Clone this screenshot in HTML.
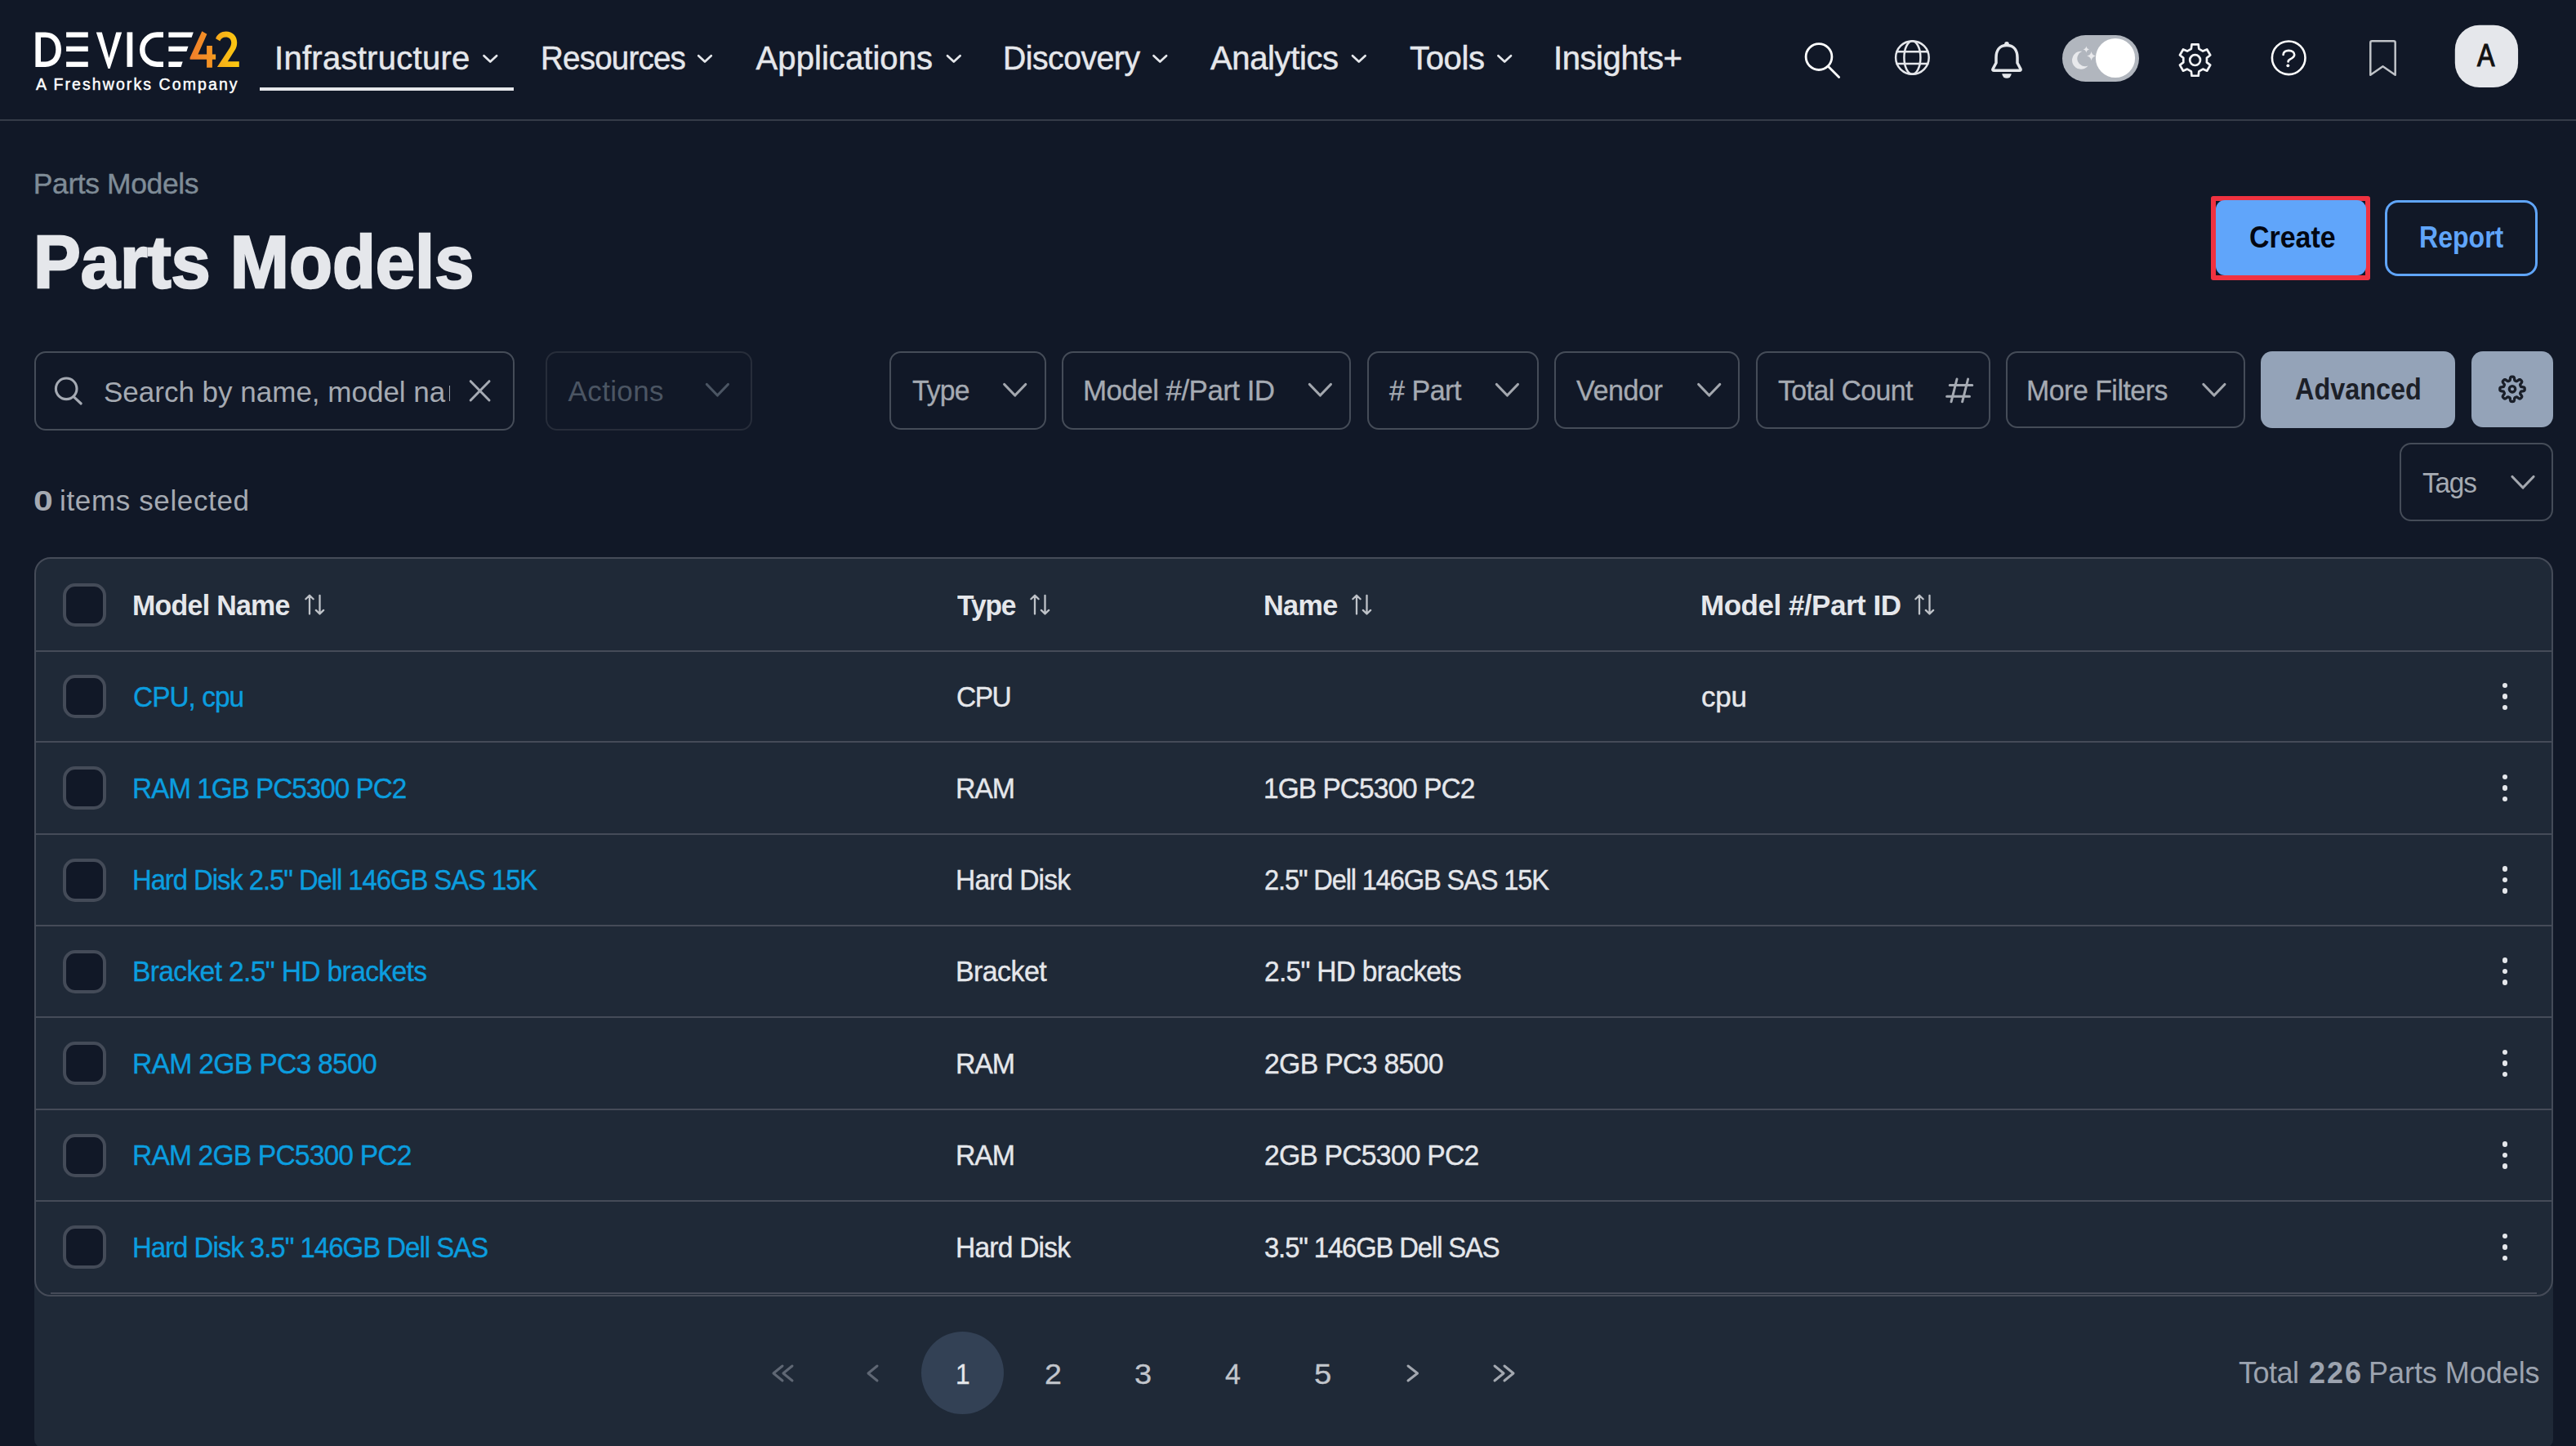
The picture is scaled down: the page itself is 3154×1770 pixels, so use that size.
<!DOCTYPE html>
<html><head><meta charset="utf-8"><style>
html,body{margin:0;padding:0;width:3154px;height:1770px;overflow:hidden;background:#111827;}
body{position:relative;font-family:"Liberation Sans", sans-serif;}
.t{position:absolute;line-height:1;white-space:nowrap;}
</style></head><body>
<div style="position:absolute;left:0;top:146px;width:3154px;height:2px;background:#353b48"></div>
<svg style="position:absolute;left:0;top:0" width="320" height="130" viewBox="0 0 320 130">
<defs><linearGradient id="lg42" x1="232" y1="0" x2="293" y2="0" gradientUnits="userSpaceOnUse"><stop offset="0" stop-color="#f07d2b"/><stop offset="0.45" stop-color="#f49523"/><stop offset="0.6" stop-color="#f7ae19"/><stop offset="1" stop-color="#fccb10"/></linearGradient></defs>
<g fill="#ffffff">
<path fill-rule="evenodd" d="M43.4 39.4 H55.5 C67.5 39.4 75 48 75 60.6 C75 73.3 67.5 81.9 55.5 81.9 H43.4 Z M50 45.8 V75.5 H55.3 C63.5 75.5 68.3 69.8 68.3 60.6 C68.3 51.5 63.5 45.8 55.3 45.8 Z"/>
<rect x="81.1" y="39.4" width="26.7" height="6.3"/>
<rect x="81.1" y="56.7" width="26.7" height="6.3"/>
<rect x="81.1" y="75.6" width="26.7" height="6.3"/>
<polygon points="117.8,39.4 124.8,39.4 133.5,71 142.2,39.4 149.2,39.4 134.6,84 132.4,84"/>
<rect x="155.5" y="39.4" width="6.8" height="42.5"/>
<path d="M200 42.6 H192.3 A18 18 0 0 0 192.3 78.7 H200" fill="none" stroke="#fff" stroke-width="6.5"/>
<polygon points="206.4,39.4 236.8,39.4 234.7,45.7 206.4,45.7"/>
<polygon points="206.4,56.7 230.5,56.7 228.4,63 206.4,63"/>
<polygon points="206.4,75.6 223.7,75.6 221.6,81.9 206.4,81.9"/>
</g>
<g fill="url(#lg42)">
<polygon points="247.3,38.2 253.4,41.8 242.4,66.5 253.1,66.5 253.1,56.1 259.9,56.1 259.9,66.5 264.1,66.5 264.1,72.7 259.9,72.7 259.9,82.7 253.1,82.7 253.1,72.7 232.6,72.7 232.6,70.6"/>
<path d="M264.1 47.2 C266 41.6 271 38.6 276.7 38.6 C284.6 38.6 290.2 44.3 290.2 52.1 C290.2 55.5 289.5 58 288.4 60.1 L278.8 75.3 H292.8 V82.1 H265.9 L280.4 60.1 C282.3 57.2 283.2 54.8 283.2 52.3 C283.2 48 280.5 45.4 276.3 45.4 C273 45.4 270.5 47.3 269.3 50.3 Z"/>
</g>
</svg>

<svg style="position:absolute;left:0;top:0" width="3154" height="140" viewBox="0 0 3154 140"><path d="M592.50 68.2 L600.30 75.6 L608.10 68.2" fill="none" stroke="#e5e7eb" stroke-width="2.7" stroke-linecap="round" stroke-linejoin="round"/></svg>
<svg style="position:absolute;left:0;top:0" width="3154" height="140" viewBox="0 0 3154 140"><path d="M855.20 68.2 L863.00 75.6 L870.80 68.2" fill="none" stroke="#e5e7eb" stroke-width="2.7" stroke-linecap="round" stroke-linejoin="round"/></svg>
<svg style="position:absolute;left:0;top:0" width="3154" height="140" viewBox="0 0 3154 140"><path d="M1160.00 68.2 L1167.80 75.6 L1175.60 68.2" fill="none" stroke="#e5e7eb" stroke-width="2.7" stroke-linecap="round" stroke-linejoin="round"/></svg>
<svg style="position:absolute;left:0;top:0" width="3154" height="140" viewBox="0 0 3154 140"><path d="M1412.50 68.2 L1420.30 75.6 L1428.10 68.2" fill="none" stroke="#e5e7eb" stroke-width="2.7" stroke-linecap="round" stroke-linejoin="round"/></svg>
<svg style="position:absolute;left:0;top:0" width="3154" height="140" viewBox="0 0 3154 140"><path d="M1656.00 68.2 L1663.80 75.6 L1671.60 68.2" fill="none" stroke="#e5e7eb" stroke-width="2.7" stroke-linecap="round" stroke-linejoin="round"/></svg>
<svg style="position:absolute;left:0;top:0" width="3154" height="140" viewBox="0 0 3154 140"><path d="M1834.40 68.2 L1842.20 75.6 L1850.00 68.2" fill="none" stroke="#e5e7eb" stroke-width="2.7" stroke-linecap="round" stroke-linejoin="round"/></svg>
<div style="position:absolute;left:318px;top:107px;width:311px;height:4px;background:#e5e7eb"></div>
<svg style="position:absolute;left:0;top:0" width="3154" height="140" viewBox="0 0 3154 140">
<g fill="none" stroke-linecap="round" stroke-linejoin="round">
<circle cx="2227" cy="69.6" r="15.9" stroke="#ffffff" stroke-width="2.8"/>
<path d="M2238.6 81.6 L2251.6 94.6" stroke="#ffffff" stroke-width="2.8"/>
<circle cx="2341.4" cy="70.5" r="20.3" stroke="#e5e7eb" stroke-width="2.5"/>
<ellipse cx="2341.4" cy="70.5" rx="10" ry="20.3" stroke="#e5e7eb" stroke-width="2.5"/>
<path d="M2322.5 63.2 H2360.3 M2322.5 78 H2360.3" stroke="#e5e7eb" stroke-width="2.5"/>
<path d="M2457 55.5 C2447.5 55.5 2444 62.5 2444 70.5 V77 L2440 84.5 Q2439.3 86.3 2441.3 86.3 H2472.7 Q2474.7 86.3 2474 84.5 L2470 77 V70.5 C2470 62.5 2466.5 55.5 2457 55.5 Z" stroke="#e5e7eb" stroke-width="3.5"/>
<path d="M2682.85 59.80 L2683.52 54.43 L2691.68 54.43 L2692.35 59.80 L2697.18 62.58 L2702.17 60.49 L2706.24 67.54 L2701.93 70.81 L2701.93 76.39 L2706.24 79.66 L2702.17 86.71 L2697.18 84.62 L2692.35 87.40 L2691.68 92.77 L2683.52 92.77 L2682.85 87.40 L2678.02 84.62 L2673.03 86.71 L2668.96 79.66 L2673.27 76.39 L2673.27 70.81 L2668.96 67.54 L2673.03 60.49 L2678.02 62.58 Z" stroke="#f3f4f6" stroke-width="2.7"/>
<circle cx="2687.6" cy="73.6" r="6.4" stroke="#f3f4f6" stroke-width="2.7"/>
<circle cx="2802.2" cy="70.8" r="20.3" stroke="#ffffff" stroke-width="2.6"/>
<path d="M2795.6 67 C2795.6 63.6 2798.6 61.9 2802.2 61.9 C2806.3 61.9 2809.2 64.1 2809.2 67 C2809.2 69.8 2806.6 71.2 2804.2 72.4 C2802.4 73.3 2801.6 74.2 2801.6 75.4" stroke="#ffffff" stroke-width="2.6"/>
<path d="M2902.3 91.8 V52.2 Q2902.3 50.2 2904.3 50.2 H2930.7 Q2932.7 50.2 2932.7 52.2 V91.8 L2917.5 81.2 Z" stroke="#bfc2c7" stroke-width="2.5"/>
</g>
<circle cx="2457" cy="53.8" r="2.8" fill="#e5e7eb"/>
<path d="M2451.3 90.2 H2462.7 A5.7 5.7 0 0 1 2451.3 90.2 Z" fill="#e5e7eb"/>
<circle cx="2801.3" cy="80.3" r="1.9" fill="#ffffff"/>
<rect x="2525" y="43" width="94" height="57" rx="28.5" fill="#b1b6be"/>
<circle cx="2590" cy="71" r="24.1" fill="#ffffff"/>
<path d="M2549.3 62.8 A11 11 0 1 0 2556.6 80.6 A9.6 9.6 0 0 1 2549.3 62.8 Z" fill="#e8e9ec"/>
<path d="M2554.4 56.6 Q2555 60 2558.2 60.6 Q2555 61.2 2554.4 64.6 Q2553.8 61.2 2550.6 60.6 Q2553.8 60 2554.4 56.6 Z" fill="#e8e9ec"/>
<path d="M2560.6 63 Q2561.4 67.6 2566 68.6 Q2561.4 69.6 2560.6 74.2 Q2559.8 69.6 2555.2 68.6 Q2559.8 67.6 2560.6 63 Z" fill="#e8e9ec"/>
<rect x="3005.8" y="30.8" width="77.3" height="76.3" rx="30" fill="#e5e7eb"/>
</svg>
<div style="position:absolute;left:2707px;top:240px;width:195px;height:103px;box-sizing:border-box;border:6px solid #f03240;border-radius:3px"></div>
<div style="position:absolute;left:2713px;top:245px;width:184px;height:92px;background:#60a5fa;border-radius:11px"></div>
<div style="position:absolute;left:2920px;top:245px;width:187px;height:93px;box-sizing:border-box;border:3px solid #60a5fa;border-radius:16px"></div>
<div style="position:absolute;left:42px;top:430px;width:588px;height:97px;box-sizing:border-box;border:2px solid #454c58;background:transparent;border-radius:14px"></div>
<div style="position:absolute;left:550px;top:472px;width:1.2px;height:19px;background:#9ca3af"></div>
<div style="position:absolute;left:668px;top:430px;width:253px;height:97px;box-sizing:border-box;border:2px solid #272d3a;background:transparent;border-radius:14px"></div>
<svg style="position:absolute;left:0;top:0;width:3154px;height:700px;overflow:visible;pointer-events:none" viewBox="0 0 3154 700"><path d="M865.40 470.5 L878.40 484 L891.40 470.5" fill="none" stroke="#4b5563" stroke-width="3.2" stroke-linecap="round" stroke-linejoin="round"/></svg>
<div style="position:absolute;left:1089px;top:430px;width:192px;height:96px;box-sizing:border-box;border:2px solid #454c58;background:transparent;border-radius:14px"></div>
<svg style="position:absolute;left:0;top:0;width:3154px;height:700px;overflow:visible;pointer-events:none" viewBox="0 0 3154 700"><path d="M1229.70 470.5 L1242.70 484 L1255.70 470.5" fill="none" stroke="#a3a7ae" stroke-width="3.2" stroke-linecap="round" stroke-linejoin="round"/></svg>
<div style="position:absolute;left:1300px;top:430px;width:354px;height:96px;box-sizing:border-box;border:2px solid #454c58;background:transparent;border-radius:14px"></div>
<svg style="position:absolute;left:0;top:0;width:3154px;height:700px;overflow:visible;pointer-events:none" viewBox="0 0 3154 700"><path d="M1603.40 470.5 L1616.40 484 L1629.40 470.5" fill="none" stroke="#a3a7ae" stroke-width="3.2" stroke-linecap="round" stroke-linejoin="round"/></svg>
<div style="position:absolute;left:1674px;top:430px;width:210px;height:96px;box-sizing:border-box;border:2px solid #454c58;background:transparent;border-radius:14px"></div>
<svg style="position:absolute;left:0;top:0;width:3154px;height:700px;overflow:visible;pointer-events:none" viewBox="0 0 3154 700"><path d="M1832.40 470.5 L1845.40 484 L1858.40 470.5" fill="none" stroke="#a3a7ae" stroke-width="3.2" stroke-linecap="round" stroke-linejoin="round"/></svg>
<div style="position:absolute;left:1903px;top:430px;width:227px;height:95px;box-sizing:border-box;border:2px solid #454c58;background:transparent;border-radius:14px"></div>
<svg style="position:absolute;left:0;top:0;width:3154px;height:700px;overflow:visible;pointer-events:none" viewBox="0 0 3154 700"><path d="M2079.70 470.5 L2092.70 484 L2105.70 470.5" fill="none" stroke="#a3a7ae" stroke-width="3.2" stroke-linecap="round" stroke-linejoin="round"/></svg>
<div style="position:absolute;left:2150px;top:430px;width:287px;height:95px;box-sizing:border-box;border:2px solid #454c58;background:transparent;border-radius:14px"></div>
<div style="position:absolute;left:2456px;top:430px;width:293px;height:94px;box-sizing:border-box;border:2px solid #454c58;background:transparent;border-radius:14px"></div>
<svg style="position:absolute;left:0;top:0;width:3154px;height:700px;overflow:visible;pointer-events:none" viewBox="0 0 3154 700"><path d="M2697.90 470.5 L2710.90 484 L2723.90 470.5" fill="none" stroke="#a3a7ae" stroke-width="3.2" stroke-linecap="round" stroke-linejoin="round"/></svg>
<svg style="position:absolute;left:0;top:440px" width="3154" height="70" viewBox="0 440 3154 70"><g fill="none" stroke="#a5aab3" stroke-width="3" stroke-linecap="round"><path d="M2387.2 471.5 H2414.8 M2383.6 485.2 H2411.5 M2396 464 L2389 491.8 M2409.6 464 L2402.6 491.8"/><circle cx="81.2" cy="475.8" r="12.8" stroke-width="3.1"/><path d="M91 486.3 L99.2 494" stroke-width="3.1"/><path d="M576.2 466.7 L599 490 M599 466.7 L576.2 490"/></g></svg>
<div style="position:absolute;left:2768px;top:430px;width:238px;height:94px;background:#94a3b8;border-radius:14px"></div>
<div style="position:absolute;left:3026px;top:430px;width:100px;height:93px;background:#94a3b8;border-radius:14px"></div>
<svg style="position:absolute;left:0;top:440px" width="3154" height="70" viewBox="0 440 3154 70"><path d="M3091.20 476.30 L3091.20 476.57 L3091.18 476.83 L3091.15 477.09 L3091.11 477.36 L3091.05 477.62 L3090.95 477.87 L3090.79 478.12 L3090.54 478.34 L3090.16 478.54 L3089.61 478.70 L3088.93 478.81 L3088.22 478.90 L3087.60 478.98 L3087.13 479.08 L3086.81 479.20 L3086.60 479.34 L3086.45 479.50 L3086.34 479.66 L3086.25 479.83 L3086.16 480.00 L3086.09 480.17 L3086.01 480.35 L3085.94 480.52 L3085.87 480.69 L3085.80 480.87 L3085.74 481.05 L3085.69 481.23 L3085.65 481.43 L3085.64 481.65 L3085.70 481.90 L3085.83 482.21 L3086.09 482.61 L3086.48 483.10 L3086.92 483.67 L3087.32 484.23 L3087.60 484.72 L3087.73 485.14 L3087.74 485.47 L3087.68 485.76 L3087.57 486.01 L3087.43 486.24 L3087.28 486.45 L3087.11 486.66 L3086.93 486.86 L3086.75 487.05 L3086.56 487.23 L3086.36 487.41 L3086.15 487.58 L3085.94 487.73 L3085.71 487.87 L3085.46 487.98 L3085.17 488.04 L3084.84 488.03 L3084.42 487.90 L3083.93 487.62 L3083.37 487.22 L3082.80 486.78 L3082.31 486.39 L3081.91 486.13 L3081.60 486.00 L3081.35 485.94 L3081.13 485.95 L3080.93 485.99 L3080.75 486.04 L3080.57 486.10 L3080.39 486.17 L3080.22 486.24 L3080.05 486.31 L3079.87 486.39 L3079.70 486.46 L3079.53 486.55 L3079.36 486.64 L3079.20 486.75 L3079.04 486.90 L3078.90 487.11 L3078.78 487.43 L3078.68 487.90 L3078.60 488.52 L3078.51 489.23 L3078.40 489.91 L3078.24 490.46 L3078.04 490.84 L3077.82 491.09 L3077.57 491.25 L3077.32 491.35 L3077.06 491.41 L3076.79 491.45 L3076.53 491.48 L3076.27 491.50 L3076.00 491.50 L3075.73 491.50 L3075.47 491.48 L3075.21 491.45 L3074.94 491.41 L3074.68 491.35 L3074.43 491.25 L3074.18 491.09 L3073.96 490.84 L3073.76 490.46 L3073.60 489.91 L3073.49 489.23 L3073.40 488.52 L3073.32 487.90 L3073.22 487.43 L3073.10 487.11 L3072.96 486.90 L3072.80 486.75 L3072.64 486.64 L3072.47 486.55 L3072.30 486.46 L3072.13 486.39 L3071.95 486.31 L3071.78 486.24 L3071.61 486.17 L3071.43 486.10 L3071.25 486.04 L3071.07 485.99 L3070.87 485.95 L3070.65 485.94 L3070.40 486.00 L3070.09 486.13 L3069.69 486.39 L3069.20 486.78 L3068.63 487.22 L3068.07 487.62 L3067.58 487.90 L3067.16 488.03 L3066.83 488.04 L3066.54 487.98 L3066.29 487.87 L3066.06 487.73 L3065.85 487.58 L3065.64 487.41 L3065.44 487.23 L3065.25 487.05 L3065.07 486.86 L3064.89 486.66 L3064.72 486.45 L3064.57 486.24 L3064.43 486.01 L3064.32 485.76 L3064.26 485.47 L3064.27 485.14 L3064.40 484.72 L3064.68 484.23 L3065.08 483.67 L3065.52 483.10 L3065.91 482.61 L3066.17 482.21 L3066.30 481.90 L3066.36 481.65 L3066.35 481.43 L3066.31 481.23 L3066.26 481.05 L3066.20 480.87 L3066.13 480.69 L3066.06 480.52 L3065.99 480.35 L3065.91 480.17 L3065.84 480.00 L3065.75 479.83 L3065.66 479.66 L3065.55 479.50 L3065.40 479.34 L3065.19 479.20 L3064.87 479.08 L3064.40 478.98 L3063.78 478.90 L3063.07 478.81 L3062.39 478.70 L3061.84 478.54 L3061.46 478.34 L3061.21 478.12 L3061.05 477.87 L3060.95 477.62 L3060.89 477.36 L3060.85 477.09 L3060.82 476.83 L3060.80 476.57 L3060.80 476.30 L3060.80 476.03 L3060.82 475.77 L3060.85 475.51 L3060.89 475.24 L3060.95 474.98 L3061.05 474.73 L3061.21 474.48 L3061.46 474.26 L3061.84 474.06 L3062.39 473.90 L3063.07 473.79 L3063.78 473.70 L3064.40 473.62 L3064.87 473.52 L3065.19 473.40 L3065.40 473.26 L3065.55 473.10 L3065.66 472.94 L3065.75 472.77 L3065.84 472.60 L3065.91 472.43 L3065.99 472.25 L3066.06 472.08 L3066.13 471.91 L3066.20 471.73 L3066.26 471.55 L3066.31 471.37 L3066.35 471.17 L3066.36 470.95 L3066.30 470.70 L3066.17 470.39 L3065.91 469.99 L3065.52 469.50 L3065.08 468.93 L3064.68 468.37 L3064.40 467.88 L3064.27 467.46 L3064.26 467.13 L3064.32 466.84 L3064.43 466.59 L3064.57 466.36 L3064.72 466.15 L3064.89 465.94 L3065.07 465.74 L3065.25 465.55 L3065.44 465.37 L3065.64 465.19 L3065.85 465.02 L3066.06 464.87 L3066.29 464.73 L3066.54 464.62 L3066.83 464.56 L3067.16 464.57 L3067.58 464.70 L3068.07 464.98 L3068.63 465.38 L3069.20 465.82 L3069.69 466.21 L3070.09 466.47 L3070.40 466.60 L3070.65 466.66 L3070.87 466.65 L3071.07 466.61 L3071.25 466.56 L3071.43 466.50 L3071.61 466.43 L3071.78 466.36 L3071.95 466.29 L3072.13 466.21 L3072.30 466.14 L3072.47 466.05 L3072.64 465.96 L3072.80 465.85 L3072.96 465.70 L3073.10 465.49 L3073.22 465.17 L3073.32 464.70 L3073.40 464.08 L3073.49 463.37 L3073.60 462.69 L3073.76 462.14 L3073.96 461.76 L3074.18 461.51 L3074.43 461.35 L3074.68 461.25 L3074.94 461.19 L3075.21 461.15 L3075.47 461.12 L3075.73 461.10 L3076.00 461.10 L3076.27 461.10 L3076.53 461.12 L3076.79 461.15 L3077.06 461.19 L3077.32 461.25 L3077.57 461.35 L3077.82 461.51 L3078.04 461.76 L3078.24 462.14 L3078.40 462.69 L3078.51 463.37 L3078.60 464.08 L3078.68 464.70 L3078.78 465.17 L3078.90 465.49 L3079.04 465.70 L3079.20 465.85 L3079.36 465.96 L3079.53 466.05 L3079.70 466.14 L3079.87 466.21 L3080.05 466.29 L3080.22 466.36 L3080.39 466.43 L3080.57 466.50 L3080.75 466.56 L3080.93 466.61 L3081.13 466.65 L3081.35 466.66 L3081.60 466.60 L3081.91 466.47 L3082.31 466.21 L3082.80 465.82 L3083.37 465.38 L3083.93 464.98 L3084.42 464.70 L3084.84 464.57 L3085.17 464.56 L3085.46 464.62 L3085.71 464.73 L3085.94 464.87 L3086.15 465.02 L3086.36 465.19 L3086.56 465.37 L3086.75 465.55 L3086.93 465.74 L3087.11 465.94 L3087.28 466.15 L3087.43 466.36 L3087.57 466.59 L3087.68 466.84 L3087.74 467.13 L3087.73 467.46 L3087.60 467.88 L3087.32 468.37 L3086.92 468.93 L3086.48 469.50 L3086.09 469.99 L3085.83 470.39 L3085.70 470.70 L3085.64 470.95 L3085.65 471.17 L3085.69 471.37 L3085.74 471.55 L3085.80 471.73 L3085.87 471.91 L3085.94 472.08 L3086.01 472.25 L3086.09 472.43 L3086.16 472.60 L3086.25 472.77 L3086.34 472.94 L3086.45 473.10 L3086.60 473.26 L3086.81 473.40 L3087.13 473.52 L3087.60 473.62 L3088.22 473.70 L3088.93 473.79 L3089.61 473.90 L3090.16 474.06 L3090.54 474.26 L3090.79 474.48 L3090.95 474.73 L3091.05 474.98 L3091.11 475.24 L3091.15 475.51 L3091.18 475.77 L3091.20 476.03 L3091.20 476.30 Z" fill="none" stroke="#1a1f29" stroke-width="3.3" stroke-linejoin="round"/><circle cx="3076" cy="476.3" r="3.7" fill="none" stroke="#1a1f29" stroke-width="3.3"/></svg>
<div style="position:absolute;left:2938px;top:542px;width:188px;height:96px;box-sizing:border-box;border:2px solid #454c58;background:transparent;border-radius:14px"></div>
<svg style="position:absolute;left:0;top:0;width:3154px;height:700px;overflow:visible;pointer-events:none" viewBox="0 0 3154 700"><path d="M3076.00 583.5 L3089.00 597 L3102.00 583.5" fill="none" stroke="#a3a7ae" stroke-width="3.2" stroke-linecap="round" stroke-linejoin="round"/></svg>
<div style="position:absolute;left:42px;top:1500px;width:3084px;height:272px;background:#1f2937;border-radius:10px"></div>
<div style="position:absolute;left:42px;top:682px;width:3084px;height:905px;box-sizing:border-box;border:2px solid #454b58;border-radius:20px;background:#1f2937"></div>
<div style="position:absolute;left:77px;top:713.5px;width:53px;height:53px;box-sizing:border-box;border:4px solid #444b58;border-radius:15px;background:#111827"></div>
<svg style="position:absolute;left:372.7px;top:727px" width="25" height="26" viewBox="0 0 25 26"><path d="M6 24.5 V1.8 M1.4 6.3 L6 1.7 L10.6 6.3 M18.5 1.8 V24.5 M13.9 19.9 L18.5 24.5 L23.1 19.9" fill="none" stroke="#bec2c8" stroke-width="2.3" stroke-linecap="round" stroke-linejoin="round"/></svg>
<svg style="position:absolute;left:1260.6px;top:727px" width="25" height="26" viewBox="0 0 25 26"><path d="M6 24.5 V1.8 M1.4 6.3 L6 1.7 L10.6 6.3 M18.5 1.8 V24.5 M13.9 19.9 L18.5 24.5 L23.1 19.9" fill="none" stroke="#bec2c8" stroke-width="2.3" stroke-linecap="round" stroke-linejoin="round"/></svg>
<svg style="position:absolute;left:1654.7px;top:727px" width="25" height="26" viewBox="0 0 25 26"><path d="M6 24.5 V1.8 M1.4 6.3 L6 1.7 L10.6 6.3 M18.5 1.8 V24.5 M13.9 19.9 L18.5 24.5 L23.1 19.9" fill="none" stroke="#bec2c8" stroke-width="2.3" stroke-linecap="round" stroke-linejoin="round"/></svg>
<svg style="position:absolute;left:2343.7px;top:727px" width="25" height="26" viewBox="0 0 25 26"><path d="M6 24.5 V1.8 M1.4 6.3 L6 1.7 L10.6 6.3 M18.5 1.8 V24.5 M13.9 19.9 L18.5 24.5 L23.1 19.9" fill="none" stroke="#bec2c8" stroke-width="2.3" stroke-linecap="round" stroke-linejoin="round"/></svg>
<div style="position:absolute;left:44px;top:796px;width:3080px;height:2px;background:#454b58"></div>
<div style="position:absolute;left:44px;top:907px;width:3080px;height:2px;background:#454b58"></div>
<div style="position:absolute;left:44px;top:1020px;width:3080px;height:2px;background:#454b58"></div>
<div style="position:absolute;left:44px;top:1132px;width:3080px;height:2px;background:#454b58"></div>
<div style="position:absolute;left:44px;top:1244px;width:3080px;height:2px;background:#454b58"></div>
<div style="position:absolute;left:44px;top:1357px;width:3080px;height:2px;background:#454b58"></div>
<div style="position:absolute;left:44px;top:1469px;width:3080px;height:2px;background:#454b58"></div>
<div style="position:absolute;left:62px;top:1582px;width:3044px;height:2px;background:#454b58"></div>
<div style="position:absolute;left:77px;top:826.0px;width:53px;height:53px;box-sizing:border-box;border:4px solid #444b58;border-radius:15px;background:#111827"></div>
<div style="position:absolute;left:3063.6px;top:835.8px;width:6.6px;height:6.6px;border-radius:50%;background:#e5e7eb"></div>
<div style="position:absolute;left:3063.6px;top:849.2px;width:6.6px;height:6.6px;border-radius:50%;background:#e5e7eb"></div>
<div style="position:absolute;left:3063.6px;top:862.6px;width:6.6px;height:6.6px;border-radius:50%;background:#e5e7eb"></div>
<div style="position:absolute;left:77px;top:938.0px;width:53px;height:53px;box-sizing:border-box;border:4px solid #444b58;border-radius:15px;background:#111827"></div>
<div style="position:absolute;left:3063.6px;top:947.8px;width:6.6px;height:6.6px;border-radius:50%;background:#e5e7eb"></div>
<div style="position:absolute;left:3063.6px;top:961.2px;width:6.6px;height:6.6px;border-radius:50%;background:#e5e7eb"></div>
<div style="position:absolute;left:3063.6px;top:974.6px;width:6.6px;height:6.6px;border-radius:50%;background:#e5e7eb"></div>
<div style="position:absolute;left:77px;top:1050.5px;width:53px;height:53px;box-sizing:border-box;border:4px solid #444b58;border-radius:15px;background:#111827"></div>
<div style="position:absolute;left:3063.6px;top:1060.3px;width:6.6px;height:6.6px;border-radius:50%;background:#e5e7eb"></div>
<div style="position:absolute;left:3063.6px;top:1073.7px;width:6.6px;height:6.6px;border-radius:50%;background:#e5e7eb"></div>
<div style="position:absolute;left:3063.6px;top:1087.1px;width:6.6px;height:6.6px;border-radius:50%;background:#e5e7eb"></div>
<div style="position:absolute;left:77px;top:1162.5px;width:53px;height:53px;box-sizing:border-box;border:4px solid #444b58;border-radius:15px;background:#111827"></div>
<div style="position:absolute;left:3063.6px;top:1172.3px;width:6.6px;height:6.6px;border-radius:50%;background:#e5e7eb"></div>
<div style="position:absolute;left:3063.6px;top:1185.7px;width:6.6px;height:6.6px;border-radius:50%;background:#e5e7eb"></div>
<div style="position:absolute;left:3063.6px;top:1199.1px;width:6.6px;height:6.6px;border-radius:50%;background:#e5e7eb"></div>
<div style="position:absolute;left:77px;top:1275.0px;width:53px;height:53px;box-sizing:border-box;border:4px solid #444b58;border-radius:15px;background:#111827"></div>
<div style="position:absolute;left:3063.6px;top:1284.8px;width:6.6px;height:6.6px;border-radius:50%;background:#e5e7eb"></div>
<div style="position:absolute;left:3063.6px;top:1298.2px;width:6.6px;height:6.6px;border-radius:50%;background:#e5e7eb"></div>
<div style="position:absolute;left:3063.6px;top:1311.6px;width:6.6px;height:6.6px;border-radius:50%;background:#e5e7eb"></div>
<div style="position:absolute;left:77px;top:1387.5px;width:53px;height:53px;box-sizing:border-box;border:4px solid #444b58;border-radius:15px;background:#111827"></div>
<div style="position:absolute;left:3063.6px;top:1397.3px;width:6.6px;height:6.6px;border-radius:50%;background:#e5e7eb"></div>
<div style="position:absolute;left:3063.6px;top:1410.7px;width:6.6px;height:6.6px;border-radius:50%;background:#e5e7eb"></div>
<div style="position:absolute;left:3063.6px;top:1424.1px;width:6.6px;height:6.6px;border-radius:50%;background:#e5e7eb"></div>
<div style="position:absolute;left:77px;top:1500.0px;width:53px;height:53px;box-sizing:border-box;border:4px solid #444b58;border-radius:15px;background:#111827"></div>
<div style="position:absolute;left:3063.6px;top:1509.8px;width:6.6px;height:6.6px;border-radius:50%;background:#e5e7eb"></div>
<div style="position:absolute;left:3063.6px;top:1523.2px;width:6.6px;height:6.6px;border-radius:50%;background:#e5e7eb"></div>
<div style="position:absolute;left:3063.6px;top:1536.6px;width:6.6px;height:6.6px;border-radius:50%;background:#e5e7eb"></div>
<div style="position:absolute;left:1128px;top:1630px;width:101px;height:101px;border-radius:50%;background:#334155"></div>
<svg style="position:absolute;left:943.5px;top:1669.0px;overflow:visible" width="29.0" height="24.0"><g transform="translate(3 3)"><path d="M11.04 0 L0 9.0 L11.04 18 M23.0 0 L11.96 9.0 L23.0 18" fill="none" stroke="#5f6774" stroke-width="3" stroke-linecap="round" stroke-linejoin="round"/></g></svg>
<svg style="position:absolute;left:1059.5px;top:1669.0px;overflow:visible" width="17.0" height="24.0"><g transform="translate(3 3)"><path d="M11.0 0 L0 9.0 L11.0 18" fill="none" stroke="#5f6774" stroke-width="3" stroke-linecap="round" stroke-linejoin="round"/></g></svg>
<svg style="position:absolute;left:1720.5px;top:1669.0px;overflow:visible" width="17.5" height="24.0"><g transform="translate(3 3)"><path d="M0 0 L11.5 9.0 L0 18" fill="none" stroke="#a3a8b0" stroke-width="3" stroke-linecap="round" stroke-linejoin="round"/></g></svg>
<svg style="position:absolute;left:1826.5px;top:1669.0px;overflow:visible" width="29.0" height="24.0"><g transform="translate(3 3)"><path d="M0 0 L11.04 9.0 L0 18 M11.96 0 L23.0 9.0 L11.96 18" fill="none" stroke="#a3a8b0" stroke-width="3" stroke-linecap="round" stroke-linejoin="round"/></g></svg>
<div class="t" style="left:43.90px;top:94.19px;font-size:19.5px;color:#ffffff;letter-spacing:2.089px;-webkit-text-stroke:0.45px #fff;">A Freshworks Company</div>
<div class="t" style="left:336.00px;top:50.54px;font-size:40px;color:#e5e7eb;letter-spacing:0.277px;-webkit-text-stroke:0.5px #e5e7eb;">Infrastructure</div>
<div class="t" style="left:661.71px;top:50.54px;font-size:40px;color:#e5e7eb;letter-spacing:-0.840px;transform:scaleX(0.9641);transform-origin:0 0;-webkit-text-stroke:0.5px #e5e7eb;">Resources</div>
<div class="t" style="left:925.60px;top:50.54px;font-size:40px;color:#e5e7eb;letter-spacing:0.065px;-webkit-text-stroke:0.5px #e5e7eb;">Applications</div>
<div class="t" style="left:1227.77px;top:50.54px;font-size:40px;color:#e5e7eb;letter-spacing:-0.479px;transform:scaleX(0.9778);transform-origin:0 0;-webkit-text-stroke:0.5px #e5e7eb;">Discovery</div>
<div class="t" style="left:1482.00px;top:50.54px;font-size:40px;color:#e5e7eb;letter-spacing:-0.382px;-webkit-text-stroke:0.5px #e5e7eb;">Analytics</div>
<div class="t" style="left:1726.00px;top:50.54px;font-size:40px;color:#e5e7eb;letter-spacing:-0.345px;-webkit-text-stroke:0.5px #e5e7eb;">Tools</div>
<div class="t" style="left:1902.00px;top:50.54px;font-size:40px;color:#e5e7eb;letter-spacing:-0.419px;-webkit-text-stroke:0.5px #e5e7eb;">Insights+</div>
<div class="t" style="left:3033.00px;top:48.83px;font-size:38px;color:#111111;transform:scaleX(0.8462);transform-origin:0 0;-webkit-text-stroke:1.2px #111;">A</div>
<div class="t" style="left:40.80px;top:207.65px;font-size:35.5px;color:#7f8c97;letter-spacing:-0.401px;-webkit-text-stroke:0.4px #7f8c97;">Parts Models</div>
<div class="t" style="left:41.42px;top:276.12px;font-size:90px;color:#e5e7eb;font-weight:700;transform:scaleX(0.9628);transform-origin:0 0;-webkit-text-stroke:2.4px #e5e7eb;">Parts Models</div>
<div class="t" style="left:2754.06px;top:272.53px;font-size:36px;color:#030712;font-weight:700;transform:scaleX(0.9424);transform-origin:0 0;">Create</div>
<div class="t" style="left:2962.22px;top:272.53px;font-size:36px;color:#60a5fa;font-weight:700;transform:scaleX(0.8903);transform-origin:0 0;">Report</div>
<div class="t" style="left:127.00px;top:461.87px;font-size:35px;color:#a5aab2;">Search by name, model na</div>
<div class="t" style="left:695.60px;top:460.87px;font-size:35px;color:#4b5563;letter-spacing:0.354px;">Actions</div>
<div class="t" style="left:1117.00px;top:460.37px;font-size:35px;color:#a5aab2;letter-spacing:-0.919px;transform:scaleX(0.9629);transform-origin:0 0;-webkit-text-stroke:0.3px currentColor;">Type</div>
<div class="t" style="left:1326.00px;top:460.37px;font-size:35px;color:#a5aab2;letter-spacing:-0.577px;-webkit-text-stroke:0.3px currentColor;">Model #/Part ID</div>
<div class="t" style="left:1701.00px;top:460.37px;font-size:35px;color:#a5aab2;letter-spacing:-0.502px;transform:scaleX(0.9732);transform-origin:0 0;-webkit-text-stroke:0.3px currentColor;"># Part</div>
<div class="t" style="left:1929.50px;top:460.37px;font-size:35px;color:#a5aab2;letter-spacing:-0.503px;transform:scaleX(0.9774);transform-origin:0 0;-webkit-text-stroke:0.3px currentColor;">Vendor</div>
<div class="t" style="left:2176.70px;top:460.37px;font-size:35px;color:#a5aab2;letter-spacing:-0.591px;transform:scaleX(0.9667);transform-origin:0 0;-webkit-text-stroke:0.3px currentColor;">Total Count</div>
<div class="t" style="left:2481.06px;top:460.37px;font-size:35px;color:#a5aab2;letter-spacing:-0.519px;transform:scaleX(0.9687);transform-origin:0 0;-webkit-text-stroke:0.3px currentColor;">More Filters</div>
<div class="t" style="left:2810.00px;top:459.03px;font-size:36px;color:#1c2028;font-weight:700;transform:scaleX(0.8997);transform-origin:0 0;">Advanced</div>
<div class="t" style="left:2965.60px;top:572.87px;font-size:35px;color:#a5aab2;letter-spacing:-1.201px;transform:scaleX(0.9509);transform-origin:0 0;">Tags</div>
<div class="t" style="left:41.48px;top:594.67px;font-size:35px;color:#a5aab2;font-weight:700;transform:scaleX(1.2222);transform-origin:0 0;">0</div>
<div class="t" style="left:73.00px;top:594.67px;font-size:35px;color:#a5aab2;letter-spacing:0.643px;">items selected</div>
<div class="t" style="left:162.06px;top:722.87px;font-size:35px;color:#e5e7eb;font-weight:700;letter-spacing:-0.716px;transform:scaleX(0.9684);transform-origin:0 0;">Model Name</div>
<div class="t" style="left:1171.80px;top:722.87px;font-size:35px;color:#e5e7eb;font-weight:700;letter-spacing:-1.129px;transform:scaleX(0.9569);transform-origin:0 0;">Type</div>
<div class="t" style="left:1546.94px;top:722.87px;font-size:35px;color:#e5e7eb;font-weight:700;letter-spacing:-0.685px;transform:scaleX(0.9779);transform-origin:0 0;">Name</div>
<div class="t" style="left:2082.00px;top:722.87px;font-size:35px;color:#e5e7eb;font-weight:700;letter-spacing:-0.489px;">Model #/Part ID</div>
<div class="t" style="left:163.05px;top:834.87px;font-size:35px;color:#0b9ddf;letter-spacing:-0.996px;transform:scaleX(0.9527);transform-origin:0 0;-webkit-text-stroke:0.4px currentColor;">CPU, cpu</div>
<div class="t" style="left:1170.84px;top:834.87px;font-size:35px;color:#e5e7eb;letter-spacing:-1.539px;transform:scaleX(0.9564);transform-origin:0 0;-webkit-text-stroke:0.4px currentColor;">CPU</div>
<div class="t" style="left:2083.00px;top:834.87px;font-size:35px;color:#e5e7eb;letter-spacing:-0.233px;-webkit-text-stroke:0.4px currentColor;">cpu</div>
<div class="t" style="left:162.10px;top:946.87px;font-size:35px;color:#0b9ddf;letter-spacing:-1.058px;transform:scaleX(0.9511);transform-origin:0 0;-webkit-text-stroke:0.4px currentColor;">RAM 1GB PC5300 PC2</div>
<div class="t" style="left:1169.86px;top:946.87px;font-size:35px;color:#e5e7eb;letter-spacing:-1.174px;transform:scaleX(0.9681);transform-origin:0 0;-webkit-text-stroke:0.4px currentColor;">RAM</div>
<div class="t" style="left:1546.99px;top:946.87px;font-size:35px;color:#e5e7eb;letter-spacing:-0.967px;transform:scaleX(0.9552);transform-origin:0 0;-webkit-text-stroke:0.4px currentColor;">1GB PC5300 PC2</div>
<div class="t" style="left:162.13px;top:1059.37px;font-size:35px;color:#0b9ddf;letter-spacing:-1.106px;transform:scaleX(0.9371);transform-origin:0 0;-webkit-text-stroke:0.4px currentColor;">Hard Disk 2.5" Dell 146GB SAS 15K</div>
<div class="t" style="left:1169.88px;top:1059.37px;font-size:35px;color:#e5e7eb;letter-spacing:-0.800px;transform:scaleX(0.9579);transform-origin:0 0;-webkit-text-stroke:0.4px currentColor;">Hard Disk</div>
<div class="t" style="left:1547.97px;top:1059.37px;font-size:35px;color:#e5e7eb;letter-spacing:-1.235px;transform:scaleX(0.9321);transform-origin:0 0;-webkit-text-stroke:0.4px currentColor;">2.5" Dell 146GB SAS 15K</div>
<div class="t" style="left:162.08px;top:1171.37px;font-size:35px;color:#0b9ddf;letter-spacing:-0.680px;transform:scaleX(0.9598);transform-origin:0 0;-webkit-text-stroke:0.4px currentColor;">Bracket 2.5" HD brackets</div>
<div class="t" style="left:1169.86px;top:1171.37px;font-size:35px;color:#e5e7eb;letter-spacing:-0.586px;transform:scaleX(0.9699);transform-origin:0 0;-webkit-text-stroke:0.4px currentColor;">Bracket</div>
<div class="t" style="left:1547.94px;top:1171.37px;font-size:35px;color:#e5e7eb;letter-spacing:-0.744px;transform:scaleX(0.9574);transform-origin:0 0;-webkit-text-stroke:0.4px currentColor;">2.5" HD brackets</div>
<div class="t" style="left:162.07px;top:1283.87px;font-size:35px;color:#0b9ddf;letter-spacing:-0.780px;transform:scaleX(0.9635);transform-origin:0 0;-webkit-text-stroke:0.4px currentColor;">RAM 2GB PC3 8500</div>
<div class="t" style="left:1169.86px;top:1283.87px;font-size:35px;color:#e5e7eb;letter-spacing:-1.174px;transform:scaleX(0.9681);transform-origin:0 0;-webkit-text-stroke:0.4px currentColor;">RAM</div>
<div class="t" style="left:1547.93px;top:1283.87px;font-size:35px;color:#e5e7eb;letter-spacing:-0.738px;transform:scaleX(0.9653);transform-origin:0 0;-webkit-text-stroke:0.4px currentColor;">2GB PC3 8500</div>
<div class="t" style="left:162.08px;top:1396.37px;font-size:35px;color:#0b9ddf;letter-spacing:-0.873px;transform:scaleX(0.9597);transform-origin:0 0;-webkit-text-stroke:0.4px currentColor;">RAM 2GB PC5300 PC2</div>
<div class="t" style="left:1169.86px;top:1396.37px;font-size:35px;color:#e5e7eb;letter-spacing:-1.174px;transform:scaleX(0.9681);transform-origin:0 0;-webkit-text-stroke:0.4px currentColor;">RAM</div>
<div class="t" style="left:1547.94px;top:1396.37px;font-size:35px;color:#e5e7eb;letter-spacing:-0.815px;transform:scaleX(0.9624);transform-origin:0 0;-webkit-text-stroke:0.4px currentColor;">2GB PC5300 PC2</div>
<div class="t" style="left:162.12px;top:1508.87px;font-size:35px;color:#0b9ddf;letter-spacing:-1.041px;transform:scaleX(0.9405);transform-origin:0 0;-webkit-text-stroke:0.4px currentColor;">Hard Disk 3.5" 146GB Dell SAS</div>
<div class="t" style="left:1169.88px;top:1508.87px;font-size:35px;color:#e5e7eb;letter-spacing:-0.800px;transform:scaleX(0.9579);transform-origin:0 0;-webkit-text-stroke:0.4px currentColor;">Hard Disk</div>
<div class="t" style="left:1547.96px;top:1508.87px;font-size:35px;color:#e5e7eb;letter-spacing:-1.168px;transform:scaleX(0.9357);transform-origin:0 0;-webkit-text-stroke:0.4px currentColor;">3.5" 146GB Dell SAS</div>
<div class="t" style="left:1170.19px;top:1663.77px;font-size:35px;color:#e5e7eb;transform:scaleX(0.9062);transform-origin:0 0;-webkit-text-stroke:0.3px currentColor;">1</div>
<div class="t" style="left:1278.62px;top:1663.77px;font-size:35px;color:#c2c6cc;transform:scaleX(1.0765);transform-origin:0 0;-webkit-text-stroke:0.3px currentColor;">2</div>
<div class="t" style="left:1388.91px;top:1663.77px;font-size:35px;color:#c2c6cc;transform:scaleX(1.0882);transform-origin:0 0;-webkit-text-stroke:0.3px currentColor;">3</div>
<div class="t" style="left:1499.80px;top:1663.77px;font-size:35px;color:#c2c6cc;transform:scaleX(0.9789);transform-origin:0 0;-webkit-text-stroke:0.3px currentColor;">4</div>
<div class="t" style="left:1609.31px;top:1663.77px;font-size:35px;color:#c2c6cc;transform:scaleX(1.0941);transform-origin:0 0;-webkit-text-stroke:0.3px currentColor;">5</div>
<div class="t" style="left:2741.00px;top:1662.83px;font-size:36px;color:#9ca3af;letter-spacing:-0.511px;">Total</div>
<div class="t" style="left:2827.00px;top:1662.83px;font-size:36px;color:#9ca3af;font-weight:700;letter-spacing:1.979px;">226</div>
<div class="t" style="left:2900.00px;top:1662.83px;font-size:36px;color:#9ca3af;letter-spacing:-0.043px;">Parts Models</div>
</body></html>
